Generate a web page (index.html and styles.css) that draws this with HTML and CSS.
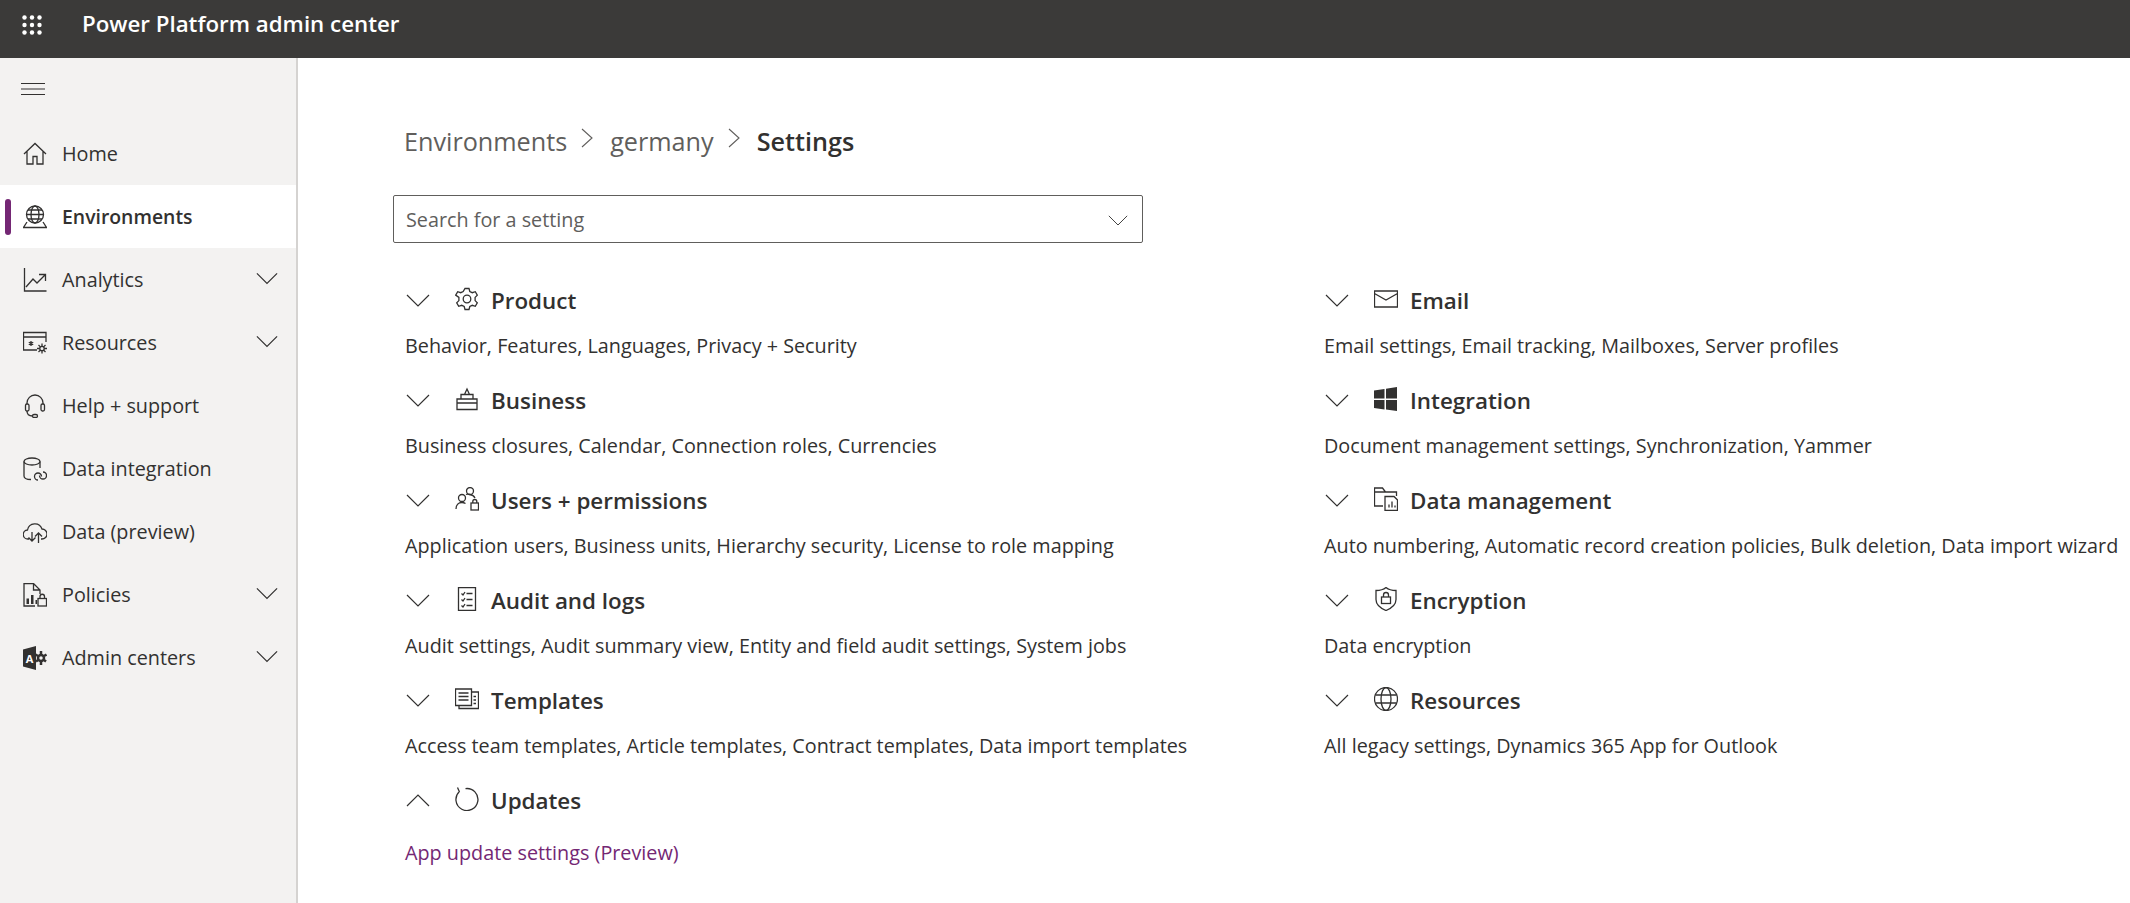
FILE: index.html
```html
<!DOCTYPE html>
<html>
  <head>
    <title>Power Platform admin center</title>
    <link rel="stylesheet" href="styles.css">
  </head>
  <body>
    <svg class="sprite" width="0" height="0">
      <symbol id="down" viewBox="0 0 24 24"><path d="M1 7l11 11L23 7"/></symbol>
      <symbol id="up" viewBox="0 0 24 24"><path d="M1 18L12 7l11 11"/></symbol>
    </svg>

    <div id="top_bar">
      <svg class="waffle" width="20" height="20" viewBox="0 0 20 20">
        <circle cx="2.5" cy="2.5" r="2.2"/><circle cx="10" cy="2.5" r="2.2"/><circle cx="17.5" cy="2.5" r="2.2"/>
        <circle cx="2.5" cy="10" r="2.2"/><circle cx="10" cy="10" r="2.2"/><circle cx="17.5" cy="10" r="2.2"/>
        <circle cx="2.5" cy="17.5" r="2.2"/><circle cx="10" cy="17.5" r="2.2"/><circle cx="17.5" cy="17.5" r="2.2"/>
      </svg>
      <div class="app_name">Power Platform admin center</div>
    </div>

    <div id="page">
      <div id="side_nav">
        <svg class="burger" width="24" height="12" viewBox="0 0 24 12"><path d="M0 .5h24M0 6h24M0 11.5h24"/></svg>

        <div class="nav_item">
          <svg class="icon" viewBox="0 0 24 24"><path d="M1 12L12 1.5 23 12M4 9.5V22h6v-7.5h4V22h6V9.5"/></svg>
          <span>Home</span>
        </div>
        <div class="nav_item active">
          <svg class="icon" viewBox="0 0 24 24"><circle cx="12" cy="9.5" r="8.5"/><ellipse cx="12" cy="9.5" rx="4" ry="8.5"/><path d="M3.5 9.5h17M5 5h14M5 14h14M4 17L.5 22.5h23L20 17"/></svg>
          <span>Environments</span>
        </div>
        <div class="nav_item">
          <svg class="icon" viewBox="0 0 24 24"><path d="M1.5 0v23h22M3 19l7-8 4 4 8-8M16 6.500h6.500V13"/></svg>
          <span>Analytics</span>
          <svg class="chevron"><use href="#down"/></svg>
        </div>
        <div class="nav_item">
          <svg class="icon" viewBox="0 0 24 24"><path d="M14 19H.5V1.500h22.500V11M.5 6h22.500"/><path d="M8 10v5M5.800 11.200l4.400 2.600M10.200 11.200l-4.400 2.600"/><circle cx="19" cy="17.500" r="2.200"/><path d="M19 12.500v2.800M19 19.700v2.800M14 17.500h2.800M21.200 17.500H24M15.500 14l1.900 1.900M22.500 14l-1.900 1.900M15.500 21l1.900-1.900M22.500 21l-1.900-1.900"/></svg>
          <span>Resources</span>
          <svg class="chevron"><use href="#down"/></svg>
        </div>
        <div class="nav_item">
          <svg class="icon" viewBox="0 0 24 24"><path d="M4 10V9a8 8 0 0 1 16 0v1M4 17c0 3 2 5 5.500 5"/><rect x="2.500" y="10" width="3.500" height="7" rx="1.500"/><rect x="18" y="10" width="3.500" height="7" rx="1.500"/><rect x="9.500" y="20.500" width="5" height="3" rx="1.500"/></svg>
          <span>Help + support</span>
        </div>
        <div class="nav_item">
          <svg class="icon" viewBox="0 0 24 24"><ellipse cx="9" cy="4.500" rx="8" ry="3.500"/><path d="M1 4.500V19c0 2 3 3.500 7 3.500M17 4.500V11"/><path d="M11.500 19.500a3.500 3.500 0 0 1 7 0 M23.500 18.500a3.500 3.500 0 0 1-7 0M11.500 19.500a3.500 3.500 0 0 0 3.500 3.500M23.500 18.500a3.500 3.500 0 0 0-3.500-3.500"/></svg>
          <span>Data integration</span>
        </div>
        <div class="nav_item">
          <svg class="icon" viewBox="0 0 24 24"><path d="M6 19H5a4.500 4.500 0 0 1-.5-9A7.500 7.500 0 0 1 19 9a5 5 0 0 1 0 10h-1M9 12v9M5.500 17.500L9 21l3.500-3.500M15.500 23V13M12 16.500l3.500-3.500 3.500 3.500"/></svg>
          <span>Data (preview)</span>
        </div>
        <div class="nav_item">
          <svg class="icon" viewBox="0 0 24 24"><path d="M12 23H1V.5h9.500L17 7v4M10.500.5V7H17"/><path class="solid" d="M3.500 15.500h2.500V21H3.500zM8 12h2.500v9H8zM12.500 17H14v4h-1.500z"/><rect x="15" y="15.500" width="8.500" height="7.500"/><path d="M17 15.500v-2a2.200 2.200 0 0 1 4.500 0v2"/></svg>
          <span>Policies</span>
          <svg class="chevron"><use href="#down"/></svg>
        </div>
        <div class="nav_item">
          <svg class="icon" viewBox="0 0 24 24"><path class="solid" d="M0 3.500L13 0v24L0 20.500z"/><text class="icon_letter" x="6.500" y="16.500">A</text><circle class="thick" cx="18" cy="12" r="3"/><path class="thick" d="M18 5v3M18 16v3M12.500 8.500l2.500 1.500M21 14l2 1.500M23.500 8.500L21 10M15 14l-2 1.500"/></svg>
          <span>Admin centers</span>
          <svg class="chevron"><use href="#down"/></svg>
        </div>
      </div>

      <div id="main">
        <div class="breadcrumb">
          <span>Environments</span>
          <svg class="crumb_sep" viewBox="0 0 12 20"><path d="M1 1l10 9-10 9"/></svg>
          <span>germany</span>
          <svg class="crumb_sep" viewBox="0 0 12 20"><path d="M1 1l10 9-10 9"/></svg>
          <span class="current">Settings</span>
        </div>

        <div class="search_box">
          <span>Search for a setting</span>
          <svg class="search_chevron"><use href="#down"/></svg>
        </div>

        <div class="columns">
          <div class="column left">
            <div class="section">
              <div class="section_head">
                <svg class="toggle"><use href="#down"/></svg>
                <svg class="section_icon" viewBox="0 0 24 24"><circle cx="12" cy="12" r="3.800"/><path d="M10 1.500h4l.8 3 2.500 1.200 3-1 2 3.400-2.200 2.300v3.200l2.200 2.300-2 3.400-3-1-2.500 1.200-.8 3h-4l-.8-3-2.500-1.200-3 1-2-3.400 2.200-2.300v-3.200L.7 8.100l2-3.400 3 1 2.500-1.200z"/></svg>
                <h2>Product</h2>
              </div>
              <p>Behavior, Features, Languages, Privacy + Security</p>
            </div>
            <div class="section">
              <div class="section_head">
                <svg class="toggle"><use href="#down"/></svg>
                <svg class="section_icon" viewBox="0 0 24 24"><path d="M2 12h20v10.500H2zM2 16h20M6 12V7.500h12V12M9.500 7.500L12 2l2.500 5.500"/></svg>
                <h2>Business</h2>
              </div>
              <p>Business closures, Calendar, Connection roles, Currencies</p>
            </div>
            <div class="section">
              <div class="section_head">
                <svg class="toggle"><use href="#down"/></svg>
                <svg class="section_icon" viewBox="0 0 24 24"><circle cx="15" cy="4" r="3.500"/><circle cx="7" cy="11" r="3.500"/><path d="M1 22c0-4 2.500-6.500 6-6.500 1.500 0 2.500.4 3.500 1M11 7.500c1-.5 2.500-.3 4 0 2.500.3 4 1.500 5 3.500"/><rect x="16" y="16" width="7.500" height="7"/><path d="M17.800 16v-1.500a2 2 0 0 1 4 0V16"/></svg>
                <h2>Users + permissions</h2>
              </div>
              <p>Application users, Business units, Hierarchy security, License to role mapping</p>
            </div>
            <div class="section">
              <div class="section_head">
                <svg class="toggle"><use href="#down"/></svg>
                <svg class="section_icon" viewBox="0 0 24 24"><path d="M3.500.5h17v23h-17zM11.500 6.500h6M11.500 12.500h6M11.500 18.500h6M6.500 6.500l1.500 1.500 2-3M6.500 12.500l1.500 1.500 2-3M6.500 18.500l1.500 1.500 2-3"/></svg>
                <h2>Audit and logs</h2>
              </div>
              <p>Audit settings, Audit summary view, Entity and field audit settings, System jobs</p>
            </div>
            <div class="section">
              <div class="section_head">
                <svg class="toggle"><use href="#down"/></svg>
                <svg class="section_icon" viewBox="0 0 24 24"><path d="M.5 2h16v16.500H.5zM16.500 5h7v16.500H4v-3M3.500 6h10M3.500 9.500h10M3.500 13h10M18.500 9.500h2.500M18.500 13h2.500M18.500 16.500h2.500"/></svg>
                <h2>Templates</h2>
              </div>
              <p>Access team templates, Article templates, Contract templates, Data import templates</p>
            </div>
            <div class="section open">
              <div class="section_head">
                <svg class="toggle"><use href="#up"/></svg>
                <svg class="section_icon" viewBox="0 0 24 24"><path d="M4.300 4.600A11 11 0 1 0 10.500 1.600M2.500.5L4.500 5"/></svg>
                <h2>Updates</h2>
              </div>
              <a class="section_link">App update settings (Preview)</a>
            </div>
          </div>

          <div class="column">
            <div class="section">
              <div class="section_head">
                <svg class="toggle"><use href="#down"/></svg>
                <svg class="section_icon" viewBox="0 0 24 24"><path d="M.5 4h23v16H.5zM.5 6.500L12 13l11.500-6.500"/></svg>
                <h2>Email</h2>
              </div>
              <p>Email settings, Email tracking, Mailboxes, Server profiles</p>
            </div>
            <div class="section">
              <div class="section_head">
                <svg class="toggle"><use href="#down"/></svg>
                <svg class="section_icon" viewBox="0 0 24 24"><path class="solid" d="M0 3.500l10.500-1.500v9.500H0zM12 1.700L23 0v11.500H12zM0 13h10.500v9.500L0 21zM12 13h11v11l-11-1.600z"/></svg>
                <h2>Integration</h2>
              </div>
              <p>Document management settings, Synchronization, Yammer</p>
            </div>
            <div class="section">
              <div class="section_head">
                <svg class="toggle"><use href="#down"/></svg>
                <svg class="section_icon" viewBox="0 0 24 24"><path d="M9 19H.5V1h8l3 4h11v4M.5 5h11"/><path d="M11 9.500h9l3.500 3.500v10.500H11zM15 20.500v-3M18 20.500v-6M21 20.500v-2"/></svg>
                <h2>Data management</h2>
              </div>
              <p>Auto numbering, Automatic record creation policies, Bulk deletion, Data import wizard</p>
            </div>
            <div class="section">
              <div class="section_head">
                <svg class="toggle"><use href="#down"/></svg>
                <svg class="section_icon" viewBox="0 0 24 24"><path d="M12 .5c3 2.500 6 3 10 3v9c0 5-4 8.500-10 11-6-2.500-10-6-10-11v-9c4 0 7-.5 10-3z"/><rect x="7.500" y="10" width="9" height="6.500"/><path d="M9.500 10V8a2.500 2.500 0 0 1 5 0v2"/></svg>
                <h2>Encryption</h2>
              </div>
              <p>Data encryption</p>
            </div>
            <div class="section">
              <div class="section_head">
                <svg class="toggle"><use href="#down"/></svg>
                <svg class="section_icon" viewBox="0 0 24 24"><circle cx="12" cy="12" r="11.500"/><ellipse cx="12" cy="12" rx="5" ry="11.500"/><path d="M1.500 8h21M1.500 16h21"/></svg>
                <h2>Resources</h2>
              </div>
              <p>All legacy settings, Dynamics 365 App for Outlook</p>
            </div>
          </div>
        </div>
      </div>
    </div>
  </body>
</html>
```

FILE: styles.css
```css
* {
  box-sizing: border-box;
}
html, body {
  margin: 0;
  padding: 0;
  height: 100%;
  overflow: hidden;
}
body {
  display: flex;
  flex-direction: column;
  background-color: #fff;
  color: #323130;
  font-family: "Open Sans", "Noto Sans", sans-serif;
  font-size: 19.800px;
}
svg {
  fill: none;
  stroke: #323130;
  stroke-width: 1.3;
  flex: 0 0 auto;
}
.sprite {
  position: absolute;
}
.solid {
  fill: #323130;
  stroke: none;
}

#top_bar {
  display: flex;
  align-items: center;
  flex: 0 0 58px;
  padding: 0 0 12px 22px;
  background-color: #3b3a39;
}
.waffle {
  fill: #fff;
  stroke: none;
  margin-top: 3px;
}
.app_name {
  margin-left: 40px;
  color: #fff;
  font-size: 22.300px;
  font-weight: 600;
}

#page {
  display: flex;
  flex: 1 1 auto;
  min-height: 0;
}
#side_nav {
  display: flex;
  flex-direction: column;
  flex: 0 0 298px;
  padding-top: 25px;
  background-color: #f3f2f1;
  border-right: 2px solid #d5d3d1;
}
.burger {
  margin: 0 0 27px 21px;
  stroke-width: 1;
}
.nav_item {
  position: relative;
  display: flex;
  align-items: center;
  height: 63px;
  padding: 0 18px 0 23px;
}
.nav_item .icon {
  width: 24px;
  height: 24px;
  margin-right: 15px;
  stroke-width: 1.300;
}
.nav_item.active {
  background-color: #fff;
  font-size: 19.400px;
  font-weight: 600;
}
.nav_item.active::before {
  content: "";
  position: absolute;
  left: 5px;
  top: 14px;
  width: 6px;
  height: 36px;
  border-radius: 3px;
  background-color: #742774;
}
.chevron {
  width: 22px;
  height: 22px;
  margin: -3px 0 0 auto;
  stroke-width: 1.300;
}
.icon_letter {
  fill: #fff;
  stroke: none;
  font-size: 11px;
  font-weight: 700;
  text-anchor: middle;
}
.thick {
  stroke-width: 2.500;
}

#main {
  flex: 1 1 auto;
  min-width: 0;
  padding: 63px 0 0 95px;
}
.breadcrumb {
  display: flex;
  align-items: center;
  height: 40px;
  padding-left: 11px;
  color: #605e5c;
  font-size: 25.200px;
}
.breadcrumb .current {
  color: #323130;
  font-weight: 600;
}
.crumb_sep {
  width: 12px;
  height: 20px;
  margin: -6px 17px 0 14px;
  stroke: #605e5c;
  stroke-width: 1.100;
}
.search_box {
  display: flex;
  align-items: center;
  justify-content: space-between;
  width: 750px;
  height: 48px;
  margin-top: 34px;
  padding: 1px 14px 0 12px;
  border: 1px solid #605e5c;
  border-radius: 2px;
  color: #605e5c;
}
.search_chevron {
  width: 20px;
  height: 20px;
  stroke-width: 1.100;
}

.columns {
  display: flex;
  margin: 37px 0 0 12px;
}
.column.left {
  flex: 0 0 919px;
}
.column {
  flex: 1 1 auto;
  min-width: 0;
}
.section {
  height: 100px;
}
.section_head {
  display: flex;
  align-items: center;
  height: 40px;
  padding-left: 1px;
}
.toggle {
  width: 24px;
  height: 24px;
  margin-right: 25px;
  stroke-width: 1.200;
}
.section_icon {
  width: 24px;
  height: 24px;
  margin: -2px 12px 0 0;
  stroke-width: 1.300;
}
h2 {
  margin: 1px 0 0 0;
  font-size: 22.400px;
  font-weight: 600;
}
p {
  margin: 11px 0 0 0;
  height: 30px;
  line-height: 30px;
  white-space: nowrap;
}
.section_link {
  display: block;
  margin-top: 18px;
  line-height: 30px;
  color: #742774;
}
```
